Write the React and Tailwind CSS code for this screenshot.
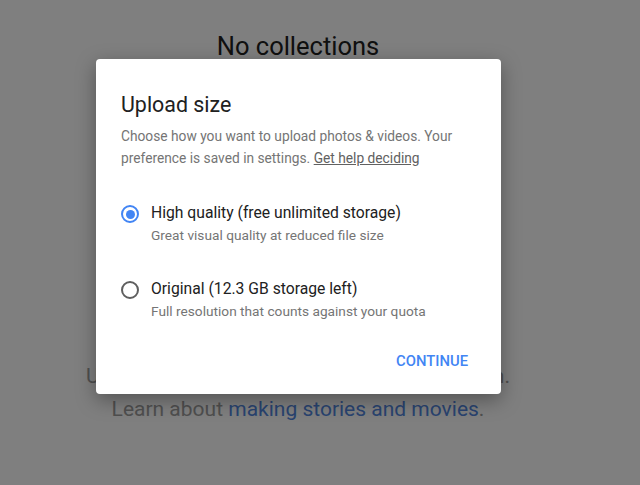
import { useState } from "react";

const options = [
  {
    id: "high",
    label: "High quality (free unlimited storage)",
    hint: "Great visual quality at reduced file size",
  },
  {
    id: "original",
    label: "Original (12.3 GB storage left)",
    hint: "Full resolution that counts against your quota",
  },
];

function Radio({ checked }) {
  return (
    <span
      className={
        "flex h-[18px] w-[18px] shrink-0 items-center justify-center rounded-full border-2 " +
        (checked ? "border-[#4285f4]" : "border-[#5f5f5f]")
      }
    >
      {checked && <span className="h-[9px] w-[9px] rounded-full bg-[#4285f4]" />}
    </span>
  );
}

export default function App() {
  const [choice, setChoice] = useState("high");

  return (
    <div
      className="relative h-[485px] w-[640px] overflow-hidden bg-white"
      style={{ fontFamily: "Roboto, 'Liberation Sans', sans-serif" }}
    >
      {/* page behind the dialog */}
      <div className="flex w-[596px] flex-col items-center text-center">
        <h2 className="mt-[29px] text-[25.5px] leading-[34px] text-[#212121]">No collections</h2>
        <p className="mt-[297px] text-[21px] leading-[33px] text-[#9e9e9e]">
          Use your Assistant to create a new collection.
        </p>
        <p className="text-[21px] leading-[33px] text-[#9e9e9e]">
          Learn about <span className="text-[#5287e0]">making stories and movies</span>.
        </p>
      </div>

      <div className="absolute inset-0 bg-black/50" />

      <div className="absolute left-[96px] top-[59px] w-[405px] rounded-sm bg-white shadow-[0_6px_20px_rgba(0,0,0,0.35)]">
        <div className="px-[25px] pt-[33px]">
          <h1 className="text-[21.4px] leading-[26px] text-[#212121]">Upload size</h1>
          <p className="mt-[7px] text-[13.75px] leading-[22px] text-[#757575]">
            Choose how you want to upload photos &amp; videos. Your preference is saved in settings.{" "}
            <a className="text-[#616161] underline">Get help deciding</a>
          </p>

          <div className="mt-[33px] flex flex-col gap-[32px]">
            {options.map((o) => (
              <button
                key={o.id}
                onClick={() => setChoice(o.id)}
                className="flex items-start gap-[12px] text-left"
              >
                <span className="mt-[3px] flex">
                  <Radio checked={choice === o.id} />
                </span>
                <span className="flex flex-col">
                  <span className="text-[15.7px] leading-[22px] text-[#212121]">{o.label}</span>
                  <span className="text-[13.7px] leading-[22px] text-[#757575]">{o.hint}</span>
                </span>
              </button>
            ))}
          </div>
        </div>

        <div className="flex justify-end px-[33px] pb-[23px] pt-[29px]">
          <button className="text-[14.8px] font-medium uppercase leading-[20px] text-[#4285f4]">
            Continue
          </button>
        </div>
      </div>
    </div>
  );
}
